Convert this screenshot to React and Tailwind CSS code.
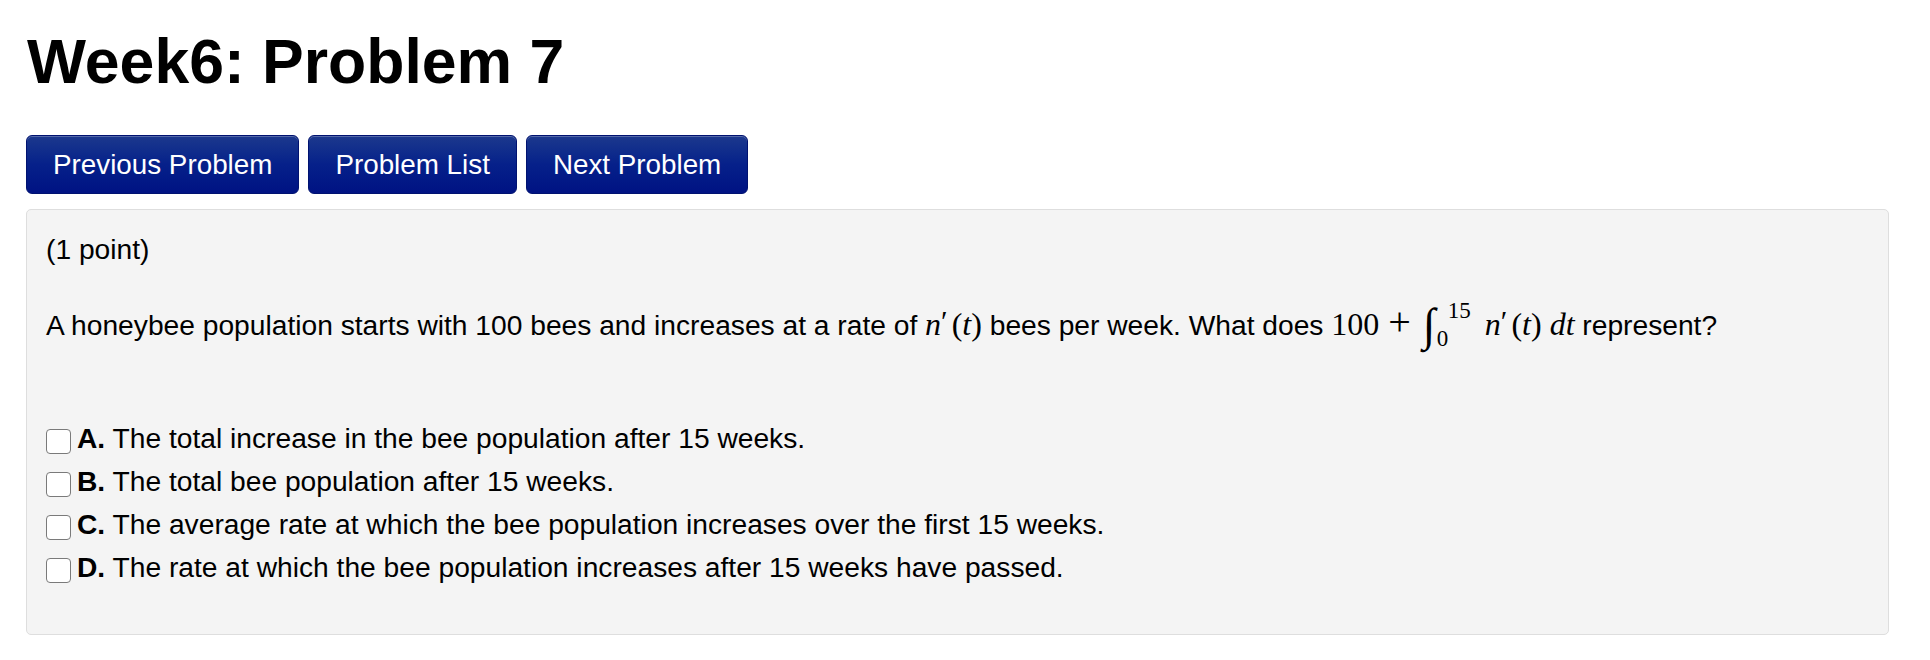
import React from "react";

const options = [
  { key: "A", text: "The total increase in the bee population after 15 weeks." },
  { key: "B", text: "The total bee population after 15 weeks." },
  { key: "C", text: "The average rate at which the bee population increases over the first 15 weeks." },
  { key: "D", text: "The rate at which the bee population increases after 15 weeks have passed." },
];

const navButtons = ["Previous Problem", "Problem List", "Next Problem"];

function NPrime() {
  // n'(t) rendered like MathJax
  return (
    <span className="font-['Liberation_Serif',serif] text-[32px] leading-none whitespace-nowrap">
      <i>n</i>
      <span className="text-[30px] align-[4px]">′</span>
      <span className="ml-[4px]">(</span>
      <i>t</i>
      <span>)</span>
    </span>
  );
}

export default function App() {
  return (
    <div className="min-h-screen bg-white text-black font-['Liberation_Sans',Arial,sans-serif] pl-[26px] pt-[30px]">
      {/* titel */}
      <h1 className="text-[62.5px] font-bold leading-[63px] pl-[1px]">Week6: Problem 7</h1>

      {/* knoppen */}
      <div className="flex gap-[9px] mt-[42px]">
        {navButtons.map((b) => (
          <button
            key={b}
            className="h-[59px] px-[26px] rounded-[6px] border border-[#001270] bg-gradient-to-b from-[#1c388d] via-[#06208a] to-[#001283] text-white text-[27.8px] leading-none shadow-[inset_0_1px_0_rgba(255,255,255,0.25)]"
          >
            {b}
          </button>
        ))}
      </div>

      {/* opgave */}
      <div className="w-[1863px] h-[426px] mt-[15px] bg-[#f4f4f4] border border-[#dedede] rounded-[5px] pl-[19px] pt-[19px] text-[28.2px]">
        <p className="leading-[40px]">(1 point)</p>

        <p className="h-[40px] leading-[40px] mt-[33px] whitespace-nowrap">
          A honeybee population starts with 100 bees and increases at a rate of <NPrime /> bees per week. What does{" "}
          <span className="font-['Liberation_Serif',serif] text-[32px] leading-none whitespace-nowrap">
            100<span className="text-[40px] ml-[9px] mr-[12px]">+</span>
            <span className="inline-flex align-middle h-[40px] -mt-[6px]">
              <i className="text-[46px] leading-[40px] w-[14px]">∫</i>
              <span className="flex flex-col justify-between text-[23px] leading-[20px] h-[48px] -mt-[4px]">
                <span className="ml-[11px]">15</span>
                <span>0</span>
              </span>
            </span>
            <span className="ml-[14px]">
              <NPrime />
            </span>
            <i className="ml-[8px]">dt</i>
          </span>{" "}
          represent?
        </p>

        <div className="mt-[75px]">
          {options.map((o) => (
            <label key={o.key} className="flex items-center h-[43px] whitespace-nowrap">
              <span className="w-[25px] h-[25px] mt-[6px] mr-[6px] rounded-[4px] border border-[#7a7a7a] bg-white shrink-0" />
              <span className="leading-[43px]">
                <b>{o.key}.</b> {o.text}
              </span>
            </label>
          ))}
        </div>
      </div>
    </div>
  );
}
